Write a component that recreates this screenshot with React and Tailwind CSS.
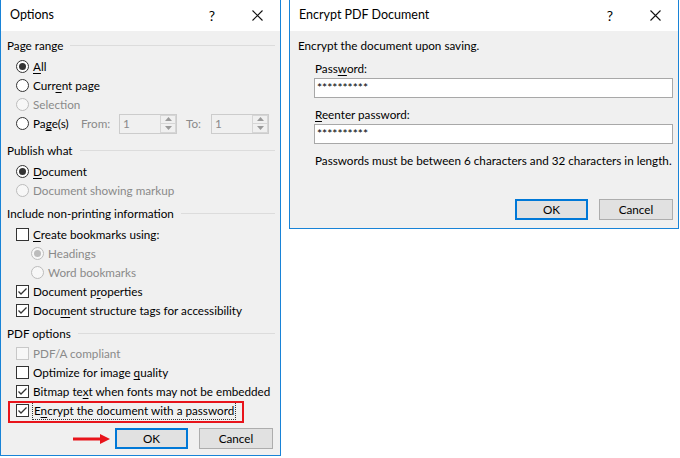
import React from 'react';

const font = "font-['Lato','Noto_Sans',sans-serif]";

const Radio = ({ checked, disabled }) => (
  <span
    className={`w-[13px] h-[13px] rounded-full border flex items-center justify-center shrink-0 ${
      disabled ? 'border-[#bcbcbc] bg-[#f7f7f7]' : 'border-[#333] bg-white'
    }`}
  >
    {checked && <span className={`w-[7px] h-[7px] rounded-full ${disabled ? 'bg-[#bcbcbc]' : 'bg-[#333]'}`} />}
  </span>
);

const Checkbox = ({ checked, disabled }) => (
  <span
    className={`w-[13px] h-[13px] border flex items-center justify-center shrink-0 ${
      disabled ? 'border-[#c8c8c8] bg-[#f7f7f7]' : 'border-[#333] bg-white'
    }`}
  >
    {checked && (
      <svg width="11" height="11" viewBox="0 0 11 11">
        <path d="M1.5 5.5 L4 8 L9.5 2.5" fill="none" stroke="#333" strokeWidth="1.3" />
      </svg>
    )}
  </span>
);

// label with the access key underlined
const Label = ({ pre, u, post, disabled, className = '' }) => (
  <span className={`whitespace-nowrap ${disabled ? 'text-[#8a8a8a]' : 'text-black'} ${className}`}>
    {pre}
    {u && <u className="underline-offset-2">{u}</u>}
    {post}
  </span>
);

const Section = ({ title, className = '' }) => (
  <div className={`h-[19px] flex items-center gap-[7px] pl-[6px] pr-[5px] ${className}`}>
    <span className="whitespace-nowrap">{title}</span>
    <span className="flex-1 h-px bg-[#dcdcdc]" />
  </div>
);

const Row = ({ children, indent = false, className = '' }) => (
  <div className={`h-[19px] flex items-center gap-[4px] ${indent ? 'pl-[30px]' : 'pl-[15px]'} ${className}`}>
    {children}
  </div>
);

const Spin = () => (
  <span className="w-[58px] h-[20px] border border-[#cccccc] flex items-stretch shrink-0">
    <span className="flex-1 pl-[3px] flex items-center text-[#8a8a8a]">1</span>
    <span className="w-[16px] flex flex-col">
      <span className="flex-1 border border-[#d6d6d6] flex items-center justify-center">
        <svg width="7" height="4" viewBox="0 0 7 4"><path d="M0 4 L3.5 0 L7 4Z" fill="#9a9a9a" /></svg>
      </span>
      <span className="flex-1 border border-t-0 border-[#d6d6d6] flex items-center justify-center">
        <svg width="7" height="4" viewBox="0 0 7 4"><path d="M0 0 L3.5 4 L7 0Z" fill="#9a9a9a" /></svg>
      </span>
    </span>
  </span>
);

const Button = ({ children, primary }) => (
  <button
    className={`h-[21px] bg-[#e1e1e1] flex items-center justify-center text-black ${
      primary ? 'w-[73px] border-2 border-[#0078d7]' : 'w-[74px] border border-[#adadad]'
    }`}
  >
    {children}
  </button>
);

const TitleBar = ({ title }) => (
  <div className="h-[31px] bg-white flex items-center pl-[9px] shrink-0">
    <span className="flex-1 text-[12.5px]">{title}</span>
    <span className="w-[20px] text-center text-[14px] mr-[25px]">?</span>
    <span className="w-[20px] flex justify-center mr-[13px]">
      <svg width="11" height="11" viewBox="0 0 11 11">
        <path d="M0.5 0.5 L10.5 10.5 M10.5 0.5 L0.5 10.5" stroke="#111" strokeWidth="1.1" />
      </svg>
    </span>
  </div>
);

const OptionsDialog = () => (
  <div className="w-[281px] h-[456px] border-x border-b border-[#1883d7] bg-[#f0f0f0] flex flex-col shrink-0">
    <TitleBar title="Options" />
    <div className="flex flex-col pt-[5px]">
      <Section title="Page range" />
      <Row className="mt-[2px]">
        <Radio checked />
        <Label u="A" post="ll" />
      </Row>
      <Row>
        <Radio />
        <Label pre="Curr" u="e" post="nt page" />
      </Row>
      <Row>
        <Radio disabled />
        <Label pre="Selection" disabled />
      </Row>
      <Row>
        <Radio />
        <Label pre="Pa" u="g" post="e(s)" className="w-[44px]" />
        <span className="text-[#8a8a8a] w-[34px]">From:</span>
        <Spin />
        <span className="ml-[5px] text-[#8a8a8a] w-[21px]">To:</span>
        <Spin />
      </Row>
      <Section title="Publish what" className="mt-[8px]" />
      <Row className="mt-[2px]">
        <Radio checked />
        <Label u="D" post="ocument" />
      </Row>
      <Row>
        <Radio disabled />
        <Label pre="Document showing markup" disabled />
      </Row>
      <Section title="Include non-printing information" className="mt-[4px]" />
      <Row className="mt-[2px]">
        <Checkbox />
        <Label u="C" post="reate bookmarks using:" />
      </Row>
      <Row indent>
        <Radio checked disabled />
        <Label pre="Headings" disabled />
      </Row>
      <Row indent>
        <Radio disabled />
        <Label pre="Word bookmarks" disabled />
      </Row>
      <Row>
        <Checkbox checked />
        <Label pre="Document p" u="r" post="operties" />
      </Row>
      <Row>
        <Checkbox checked />
        <Label pre="Docu" u="m" post="ent structure tags for accessibility" />
      </Row>
      <Section title="PDF options" className="mt-[4px]" />
      <Row className="mt-[1px]">
        <Checkbox disabled />
        <Label pre="PDF/A compliant" disabled />
      </Row>
      <Row>
        <Checkbox />
        <Label pre="Optimize for image " u="q" post="uality" />
      </Row>
      <Row>
        <Checkbox checked />
        <Label pre="Bitmap te" u="x" post="t when fonts may not be embedded" />
      </Row>
      <Row className="relative">
        <Checkbox checked />
        <span className="outline outline-1 outline-dotted outline-[#333] px-[1px] leading-[17px]">
          <Label pre="E" u="n" post="crypt the document with a password" />
        </span>
        <span className="absolute left-[7px] top-0 w-[236px] h-[22px] border-2 border-[#e8141b]" />
      </Row>
      <div className="mt-[8px] flex items-center justify-end gap-[11px] pr-[7px]">
        <svg width="38" height="12" viewBox="0 0 38 12" className="-mr-[7px]">
          <path d="M0 6 H29" stroke="#e8141b" strokeWidth="3" />
          <path d="M27 1 L37 6 L27 11 Z" fill="#e8141b" />
        </svg>
        <Button primary>OK</Button>
        <Button>Cancel</Button>
      </div>
    </div>
  </div>
);

const EncryptDialog = () => (
  <div className="w-[390px] h-[229px] border-x border-b border-[#1883d7] bg-[#f0f0f0] flex flex-col shrink-0">
    <TitleBar title="Encrypt PDF Document" />
    <div className="flex flex-col pt-[6px] pl-[8px] pr-[5px]">
      <div className="h-[18px] flex items-center whitespace-nowrap">Encrypt the document upon saving.</div>
      <div className="mt-[6px] h-[16px] flex items-center pl-[17px]">
        <Label pre="Pass" u="w" post="ord:" />
      </div>
      <div className="mt-[1px] ml-[16px] h-[20px] bg-white border border-[#a8a8a8] flex items-center pl-[2px] text-[12px]">
        **********
      </div>
      <div className="mt-[9px] h-[16px] flex items-center pl-[17px]">
        <Label u="R" post="eenter password:" />
      </div>
      <div className="mt-[1px] ml-[16px] h-[20px] bg-white border border-[#a8a8a8] flex items-center pl-[2px] text-[12px]">
        **********
      </div>
      <div className="mt-[8px] h-[18px] flex items-center pl-[17px] whitespace-nowrap">
        Passwords must be between 6 characters and 32 characters in length.
      </div>
      <div className="mt-[29px] flex justify-end gap-[11px]">
        <Button primary>OK</Button>
        <Button>Cancel</Button>
      </div>
    </div>
  </div>
);

export default function App() {
  return (
    <div className={`w-[680px] h-[458px] bg-white flex items-start gap-[8px] text-[11.7px] text-black ${font}`}>
      <OptionsDialog />
      <EncryptDialog />
    </div>
  );
}
